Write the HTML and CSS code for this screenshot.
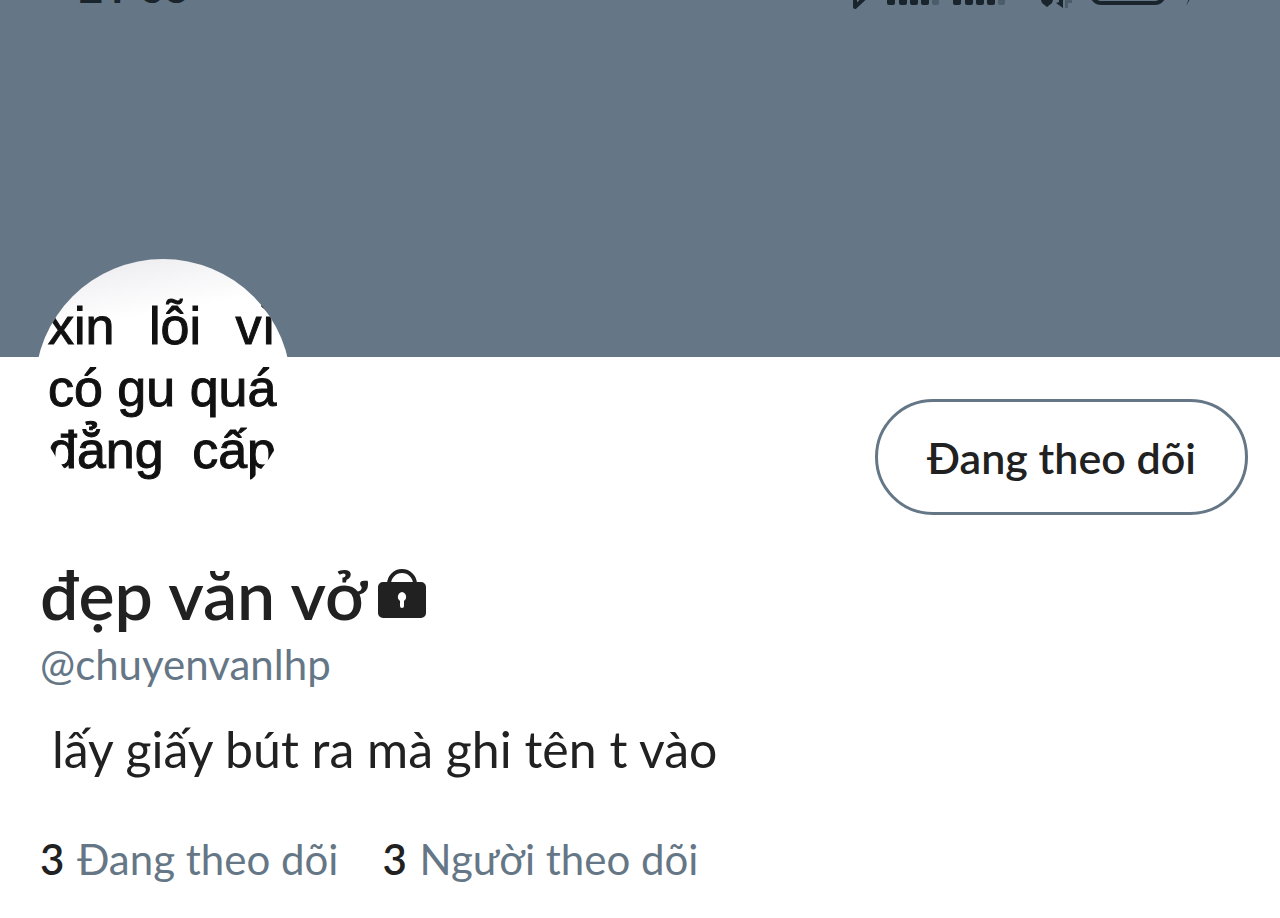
FILE: index.html
```
<!DOCTYPE html>
<html lang="vi">

<head>
    <meta charset="UTF-8">
    <meta name="viewport" content="width=device-width, initial-scale=1.0">
    <title>đẹp văn vở</title>
    <link rel="stylesheet" href="styles.css">
</head>

<body>
    <header class="banner">
        <div class="status">
            <span class="clock">21 53</span>
            <svg class="status-icons" viewBox="0 0 360 40" aria-hidden="true">
                <!-- bluetooth -->
                <path d="M15 4v33l14-13" fill="none" stroke="#1a242c" stroke-width="4" stroke-linejoin="round" />
                <!-- signal -->
                <g fill="#1a242c">
                    <rect x="47" y="26" width="8" height="9" rx="2" />
                    <rect x="59" y="22" width="8" height="13" rx="2" />
                    <rect x="70" y="16" width="8" height="19" rx="2" />
                    <rect x="81" y="10" width="8" height="25" rx="2" />
                    <rect x="113" y="26" width="8" height="9" rx="2" />
                    <rect x="125" y="22" width="8" height="13" rx="2" />
                    <rect x="136" y="16" width="8" height="19" rx="2" />
                    <rect x="147" y="10" width="8" height="25" rx="2" />
                </g>
                <g fill="#4b5c6a">
                    <rect x="92" y="4" width="7" height="31" rx="2" />
                    <rect x="158" y="4" width="7" height="31" rx="2" />
                    <path d="M225 28h7v5h-4v5h-3z" />
                </g>
                <!-- wifi -->
                <path d="M201 30h12l-1 3-5 4-5-4z" fill="#1a242c" />
                <path d="M216 33l3-1v-8h4v14z" fill="#1a242c" />
                <!-- battery -->
                <rect x="252" y="3" width="72" height="30" rx="9" fill="none" stroke="#1a242c" stroke-width="4" />
                <path d="M346 8l-2 18h6l-4 10 8-14h-6z" fill="#1a242c" />
            </svg>
        </div>
    </header>

    <main class="profile">
        <div class="top">
            <div class="avatar">
                <p class="avatar-line">xin lỗi vì</p>
                <p class="avatar-line">có gu quá</p>
                <p class="avatar-line">đẳng cấp</p>
            </div>
            <button class="follow" type="button">Đang theo dõi</button>
        </div>

        <h1 class="name">
            đẹp văn vở
            <svg class="lock" viewBox="0 0 50 50" aria-hidden="true">
                <path d="M12 16v-1a13 13 0 0 1 26 0v1" fill="none" stroke="#212121" stroke-width="4" />
                <path fill="#212121" fill-rule="evenodd" d="M6 13h38a5 5 0 0 1 5 5v26a5 5 0 0 1-5 5H6a5 5 0 0 1-5-5V18a5 5 0 0 1 5-5zM25 23a5 5 0 0 0-2 9v5q0 2 2 2t2-2v-5a5 5 0 0 0-2-9z" />
            </svg>
        </h1>
        <p class="handle">@chuyenvanlhp</p>
        <p class="bio">lấy giấy bút ra mà ghi tên t vào</p>
        <div class="stats">
            <a class="stat" href="#"><b class="count">3</b> Đang theo dõi</a>
            <a class="stat" href="#"><b class="count">3</b> Người theo dõi</a>
        </div>
    </main>
</body>

</html>
```
FILE: styles.css
```
* {
    margin: 0;
    padding: 0;
    box-sizing: border-box;
}

body {
    background-color: #fff;
    color: #212121;
    font-family: Lato, "Noto Sans", sans-serif;
}

.banner {
    height: 357px;
    background-color: #657786;
    overflow: hidden;
}

.status {
    display: flex;
    justify-content: space-between;
    align-items: flex-end;
    height: 40px;
    margin-top: -30px;
    padding: 0 80px 0 78px;
}

.clock {
    color: #1a242c;
    font-family: Roboto, sans-serif;
    font-size: 44px;
    font-weight: 600;
    line-height: 44px;
}

.status-icons {
    width: 360px;
    height: 40px;
}

.profile {
    padding: 0 32px 32px 40px;
}

.top {
    display: flex;
    justify-content: space-between;
    align-items: flex-end;
    margin-top: -98px;
}

.avatar {
    width: 256px;
    height: 256px;
    margin-left: -5px;
    padding: 36px 15px 0 13px;
    border-radius: 50%;
    background: linear-gradient(170deg, #e9e8ed 0, #fff 25%);
    overflow: hidden;
}

.avatar-line {
    color: #111;
    font-family: "Liberation Sans", sans-serif;
    font-size: 52px;
    line-height: 62px;
    text-align-last: justify;
    white-space: nowrap;
    -webkit-text-stroke: 1px #111;
}

.follow {
    height: 116px;
    padding: 0 49px;
    border: 3px solid #657786;
    border-radius: 58px;
    background-color: #fff;
    color: #212121;
    font-family: inherit;
    font-size: 43px;
    font-weight: 600;
}

.name {
    display: flex;
    align-items: center;
    gap: 10px;
    margin-top: 36px;
    font-size: 68px;
    font-weight: 600;
    line-height: 86px;
}

.lock {
    width: 50px;
    height: 50px;
}

.handle {
    color: #657786;
    font-size: 42px;
    line-height: 54px;
}

.bio {
    margin-top: 26px;
    padding-left: 12px;
    font-size: 50px;
    line-height: 64px;
}

.stats {
    display: flex;
    gap: 44px;
    margin-top: 48px;
}

.stat {
    color: #657786;
    font-size: 42px;
    line-height: 60px;
    text-decoration: none;
}

.count {
    margin-right: 2px;
    color: #212121;
    font-weight: 600;
}
```
